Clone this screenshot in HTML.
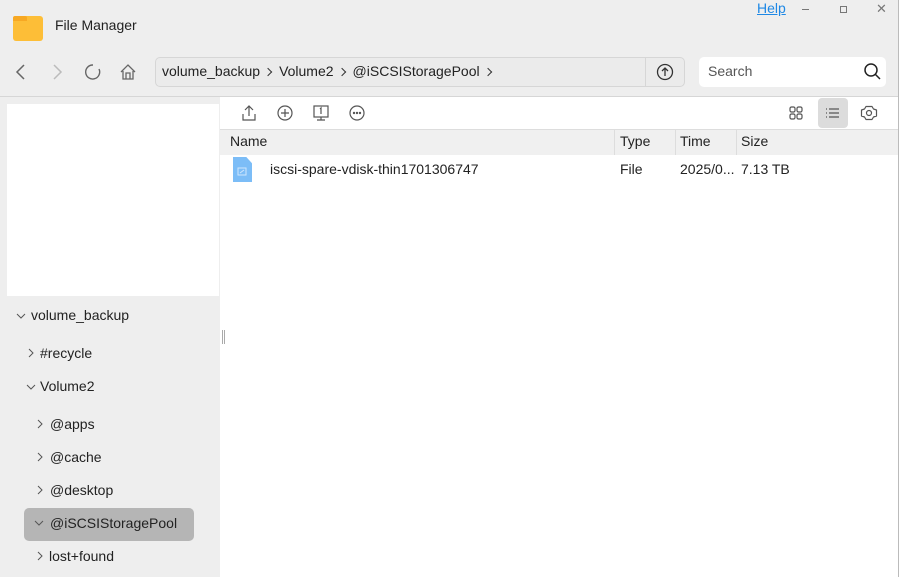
<!DOCTYPE html>
<html><head><style>
*{margin:0;padding:0;box-sizing:border-box}
body{width:902px;height:577px;overflow:hidden;background:#eeeeee;font-family:"Liberation Sans",sans-serif;color:#222;position:relative}
.a{position:absolute}
.t{font-size:14px}
svg{position:absolute}
.ch{display:inline-block;width:6px;height:6px;border-right:1.2px solid #333;border-top:1.2px solid #333;transform:rotate(45deg);margin:0 8px 1px 5px}
</style></head><body>
<div class="a" style="left:898px;top:0;width:4px;height:577px;background:#fff;border-left:1px solid #bbb"></div>
<!-- title -->
<div class="a" style="left:13px;top:16px;width:30px;height:25px;background:#fdbe37;border-radius:3px"></div>
<div class="a" style="left:13px;top:16px;width:14px;height:5px;background:#f7a823;border-radius:2px 2px 0 0"></div>
<div class="a t" style="left:55px;top:17px">File Manager</div>
<div class="a t" style="left:757px;top:0px;color:#1e88e5;text-decoration:underline">Help</div>
<div class="a" style="left:802px;top:9px;width:7px;height:1px;background:#777"></div>
<div class="a" style="left:840px;top:6px;width:7px;height:7px;border:1px solid #777"></div>
<div class="a" style="left:876px;top:1px;font-size:13px;color:#777">✕</div>
<!-- nav -->
<svg style="left:12px;top:62px" width="20" height="20"><path d="M12 3 L5 10 L12 17" fill="none" stroke="#666" stroke-width="1.5"/></svg>
<svg style="left:48px;top:62px" width="20" height="20"><path d="M6 3 L13 10 L6 17" fill="none" stroke="#bbb" stroke-width="1.5"/></svg>
<svg style="left:83px;top:62px" width="20" height="20"><path d="M10 3 A7 7 0 1 0 16 7" fill="none" stroke="#666" stroke-width="1.4"/></svg>
<svg style="left:118px;top:62px" width="20" height="20"><path d="M3 10 L10 3 L17 10 M5 9 V17 H15 V9 M8 17 V11 H12 V17" fill="none" stroke="#666" stroke-width="1.3"/></svg>
<div class="a" style="left:155px;top:57px;width:530px;height:30px;border:1px solid #d6d6d6;border-radius:5px;background:#ebebeb"></div>
<div class="a" style="left:645px;top:57px;width:1px;height:30px;background:#d6d6d6"></div>
<div class="a t" style="left:162px;top:63px;white-space:nowrap">volume_backup<span class="ch"></span>Volume2<span class="ch"></span>@iSCSIStoragePool<span class="ch"></span></div>
<svg style="left:655px;top:62px" width="20" height="20"><circle cx="10" cy="10" r="7.5" fill="none" stroke="#333" stroke-width="1.3"/><path d="M10 14 V6 M7 9 L10 6 L13 9" fill="none" stroke="#333" stroke-width="1.3"/></svg>
<div class="a" style="left:699px;top:57px;width:187px;height:30px;background:#fff;border-radius:5px"></div>
<div class="a t" style="left:708px;top:63px;color:#555">Search</div>
<svg style="left:862px;top:62px" width="20" height="20"><circle cx="9" cy="8" r="6" fill="none" stroke="#222" stroke-width="1.5"/><path d="M13 12 L18 17" stroke="#222" stroke-width="1.5"/></svg>
<div class="a" style="left:0;top:96px;width:898px;height:1px;background:#d6d6d6"></div>
<!-- sidebar -->
<div class="a" style="left:7px;top:104px;width:212px;height:192px;background:#fff"></div>
<div class="a t" style="left:31px;top:307px">volume_backup</div>
<div class="a t" style="left:40px;top:345px">#recycle</div>
<div class="a t" style="left:40px;top:378px">Volume2</div>
<div class="a t" style="left:50px;top:416px">@apps</div>
<div class="a t" style="left:50px;top:449px">@cache</div>
<div class="a t" style="left:50px;top:482px">@desktop</div>
<div class="a" style="left:24px;top:508px;width:170px;height:33px;background:#b5b5b5;border-radius:5px"></div>
<div class="a t" style="left:50px;top:515px">@iSCSIStoragePool</div>
<div class="a t" style="left:49px;top:548px">lost+found</div>
<svg style="left:0;top:300px" width="60" height="277" fill="none" stroke="#555" stroke-width="1">
<path d="M17 14 L21 18 L25 14"/><path d="M29 49 L33 53 L29 57"/><path d="M27 85 L31 89 L35 85"/>
<path d="M38 120 L42 124 L38 128"/><path d="M38 153 L42 157 L38 161"/><path d="M38 186 L42 190 L38 194"/>
<path d="M35 221 L39 225 L43 221"/><path d="M38 252 L42 256 L38 260"/></svg>
<!-- main -->
<div class="a" style="left:220px;top:97px;width:678px;height:480px;background:#fff"></div>
<div class="a" style="left:222px;top:330px;height:14px;border-left:1px solid #aaa;width:3px;border-right:1px solid #aaa"></div>
<svg style="left:240px;top:103px" width="140" height="20" fill="none" stroke="#555" stroke-width="1.2">
<path d="M9 13 V3 M5 7 L9 3 L13 7 M3 11 V17 H15 V11"/>
<circle cx="45" cy="10" r="7"/><path d="M45 6 V14 M41 10 H49"/>
<rect x="74" y="3" width="14" height="11"/><path d="M81 14 V17 M77 17 H85 M80 6 L81 5 V11"/>
<circle cx="117" cy="10" r="7"/><circle cx="114" cy="10" r=".6"/><circle cx="117" cy="10" r=".6"/><circle cx="120" cy="10" r=".6"/></svg>
<div class="a" style="left:818px;top:98px;width:30px;height:30px;background:#dcdcdc;border-radius:4px"></div>
<svg style="left:786px;top:103px" width="100" height="20" fill="none" stroke="#555" stroke-width="1.2">
<rect x="4" y="4" width="5" height="5" rx="1.5"/><rect x="11" y="4" width="5" height="5" rx="1.5"/><rect x="4" y="11" width="5" height="5" rx="1.5"/><rect x="11" y="11" width="5" height="5" rx="1.5"/>
<path d="M43 6 H53 M43 10 H53 M43 14 H53 M40 6 H41 M40 10 H41 M40 14 H41"/>
<circle cx="83" cy="10" r="2.5"/><path d="M80 3.5 H86 L87.5 6 L90.5 7 V13 L87.5 14 L86 16.5 H80 L78.5 14 L75.5 13 V7 L78.5 6 Z" stroke-linejoin="round"/></svg>
<div class="a" style="left:220px;top:129px;width:678px;height:26px;background:#f0f0f0;border-top:1px solid #ddd"></div>
<div class="a" style="left:614px;top:129px;width:1px;height:26px;background:#ddd"></div>
<div class="a" style="left:675px;top:129px;width:1px;height:26px;background:#ddd"></div>
<div class="a" style="left:736px;top:129px;width:1px;height:26px;background:#ddd"></div>
<div class="a t" style="left:230px;top:133px">Name</div>
<div class="a t" style="left:620px;top:133px">Type</div>
<div class="a t" style="left:680px;top:133px">Time</div>
<div class="a t" style="left:741px;top:133px">Size</div>
<div class="a" style="left:233px;top:157px;width:19px;height:25px;background:#7cbdf7;clip-path:polygon(0 0,70% 0,100% 25%,100% 100%,0 100%)"></div>
<svg style="left:236px;top:165px" width="13" height="12" fill="none" stroke="#cfe6fc" stroke-width="1"><rect x="2" y="3" width="8" height="7"/><path d="M4 8 L8 5"/></svg>
<div class="a t" style="left:270px;top:161px">iscsi-spare-vdisk-thin1701306747</div>
<div class="a t" style="left:620px;top:161px">File</div>
<div class="a t" style="left:680px;top:161px">2025/0...</div>
<div class="a t" style="left:741px;top:161px">7.13 TB</div>
</body></html>
